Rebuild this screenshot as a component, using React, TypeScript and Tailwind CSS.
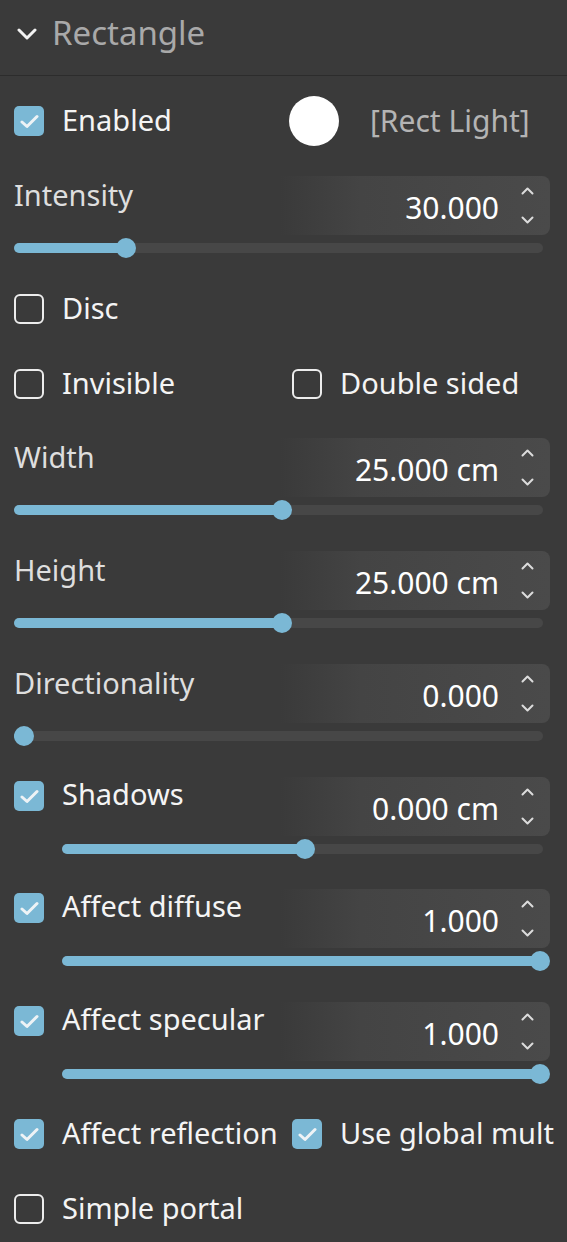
import type { ReactNode } from "react";

const FONT = { fontFamily: '"Noto Sans", "Open Sans", sans-serif' };

function Check({ checked }: { checked: boolean }) {
  if (!checked) {
    return <div className="w-[30px] h-[30px] shrink-0 rounded-[6px] border-2 border-[#ececec]" />;
  }
  return (
    <div className="w-[30px] h-[30px] shrink-0 rounded-[5px] bg-[#7bb8d5] flex items-center justify-center">
      <svg width="19" height="15" viewBox="0 0 19 15" fill="none">
        <polyline points="2,8 7,12.5 17,2.5" stroke="#eef3f6" strokeWidth="3" strokeLinecap="round" strokeLinejoin="round" />
      </svg>
    </div>
  );
}

function Chev({ up }: { up?: boolean }) {
  return (
    <svg width="13" height="8" viewBox="0 0 13 8" fill="none">
      <polyline
        points={up ? "1.5,6.5 6.5,1.5 11.5,6.5" : "1.5,1.5 6.5,6.5 11.5,1.5"}
        stroke="#dcdcdc"
        strokeWidth="2"
        strokeLinecap="round"
        strokeLinejoin="round"
      />
    </svg>
  );
}

function NumBox({ value }: { value: string }) {
  return (
    <div className="ml-auto h-[59px] w-[270px] shrink-0 rounded-r-[8px] bg-gradient-to-r from-[#3a3a3a00] via-[#444444] via-30% to-[#4a4a4a] flex items-center">
      <span className="ml-auto pt-[4px] text-[30px] text-white">{value}</span>
      <div className="w-[51px] flex flex-col items-center gap-[21px] pl-[5px]">
        <Chev up />
        <Chev />
      </div>
    </div>
  );
}

function Slider({ thumb, indent }: { thumb: number; indent?: boolean }) {
  return (
    <div className={`mt-[8px] relative h-[10px] rounded-full bg-[#474747] mr-[7px] ${indent ? "ml-[48px]" : ""}`}>
      <div className="absolute left-0 top-0 h-full rounded-full bg-[#7bb8d5]" style={{ width: thumb }} />
      <div
        className="absolute top-1/2 w-[20px] h-[20px] -translate-x-1/2 -translate-y-1/2 rounded-full bg-[#7bb8d5]"
        style={{ left: thumb }}
      />
    </div>
  );
}

function NumBlock({
  label,
  value,
  thumb,
  check,
  mt,
}: {
  label: string;
  value: string;
  thumb: number;
  check?: boolean;
  mt: string;
}) {
  return (
    <div className={mt}>
      <div className="flex items-start">
        {check ? (
          <div className="flex items-center gap-[18px] pt-[4px]">
            <Check checked />
            <span className="text-[29px] text-[#f4f4f4] leading-[30px] -mt-[4px] whitespace-nowrap">{label}</span>
          </div>
        ) : (
          <span className="pt-[1px] text-[29px] leading-[36px] text-[#dedede]">{label}</span>
        )}
        <NumBox value={value} />
      </div>
      <Slider thumb={thumb} indent={check} />
    </div>
  );
}

function CheckItem({ checked, label, className }: { checked: boolean; label: ReactNode; className?: string }) {
  return (
    <div className={`flex items-center gap-[18px] shrink-0 ${className ?? ""}`}>
      <Check checked={checked} />
      <span className="text-[29px] text-[#f4f4f4] -mt-[2px] whitespace-nowrap">{label}</span>
    </div>
  );
}

export default function App() {
  return (
    <div className="w-[567px] h-[1242px] bg-[#3a3a3a] overflow-hidden" style={FONT}>
      {/* Header */}
      <div className="h-[76px] border-b border-[#2c2c2c] flex items-center pl-[17px] gap-[15px]">
        <svg width="20" height="12" viewBox="0 0 20 12" fill="none" className="-mt-[8px]">
          <polyline points="2,2 10,10 18,2" stroke="#f2f2f2" strokeWidth="3" strokeLinecap="round" strokeLinejoin="round" />
        </svg>
        <span className="text-[33px] text-[#a9a9a9] -mt-[9px]">Rectangle</span>
      </div>

      <div className="pl-[14px] pr-[17px]">
        {/* Enabled */}
        <div className="h-[90px] flex items-center">
          <CheckItem checked label="Enabled" className="w-[275px]" />
          <div className="w-[50px] h-[50px] rounded-full bg-white" />
          <span className="ml-[31px] text-[30px] text-[#b4b4b4] -mt-[2px]">[Rect Light]</span>
        </div>

        <NumBlock mt="mt-[10px]" label="Intensity" value="30.000" thumb={112} />

        <div className="mt-[36px] h-[40px] flex items-center">
          <CheckItem checked={false} label="Disc" />
        </div>

        <div className="mt-[35px] h-[40px] flex items-center">
          <CheckItem checked={false} label="Invisible" className="w-[278px]" />
          <CheckItem checked={false} label="Double sided" />
        </div>

        <NumBlock mt="mt-[34px]" label="Width" value="25.000 cm" thumb={268} />
        <NumBlock mt="mt-[36px]" label="Height" value="25.000 cm" thumb={268} />
        <NumBlock mt="mt-[36px]" label="Directionality" value="0.000" thumb={10} />
        <NumBlock mt="mt-[36px]" label="Shadows" value="0.000 cm" thumb={243} check />
        <NumBlock mt="mt-[35px]" label="Affect diffuse" value="1.000" thumb={478} check />
        <NumBlock mt="mt-[36px]" label="Affect specular" value="1.000" thumb={478} check />

        <div className="mt-[35px] h-[40px] flex items-center">
          <CheckItem checked label="Affect reflection" className="w-[278px]" />
          <CheckItem checked label="Use global mult" />
        </div>

        <div className="mt-[35px] h-[40px] flex items-center">
          <CheckItem checked={false} label="Simple portal" />
        </div>
      </div>
    </div>
  );
}
